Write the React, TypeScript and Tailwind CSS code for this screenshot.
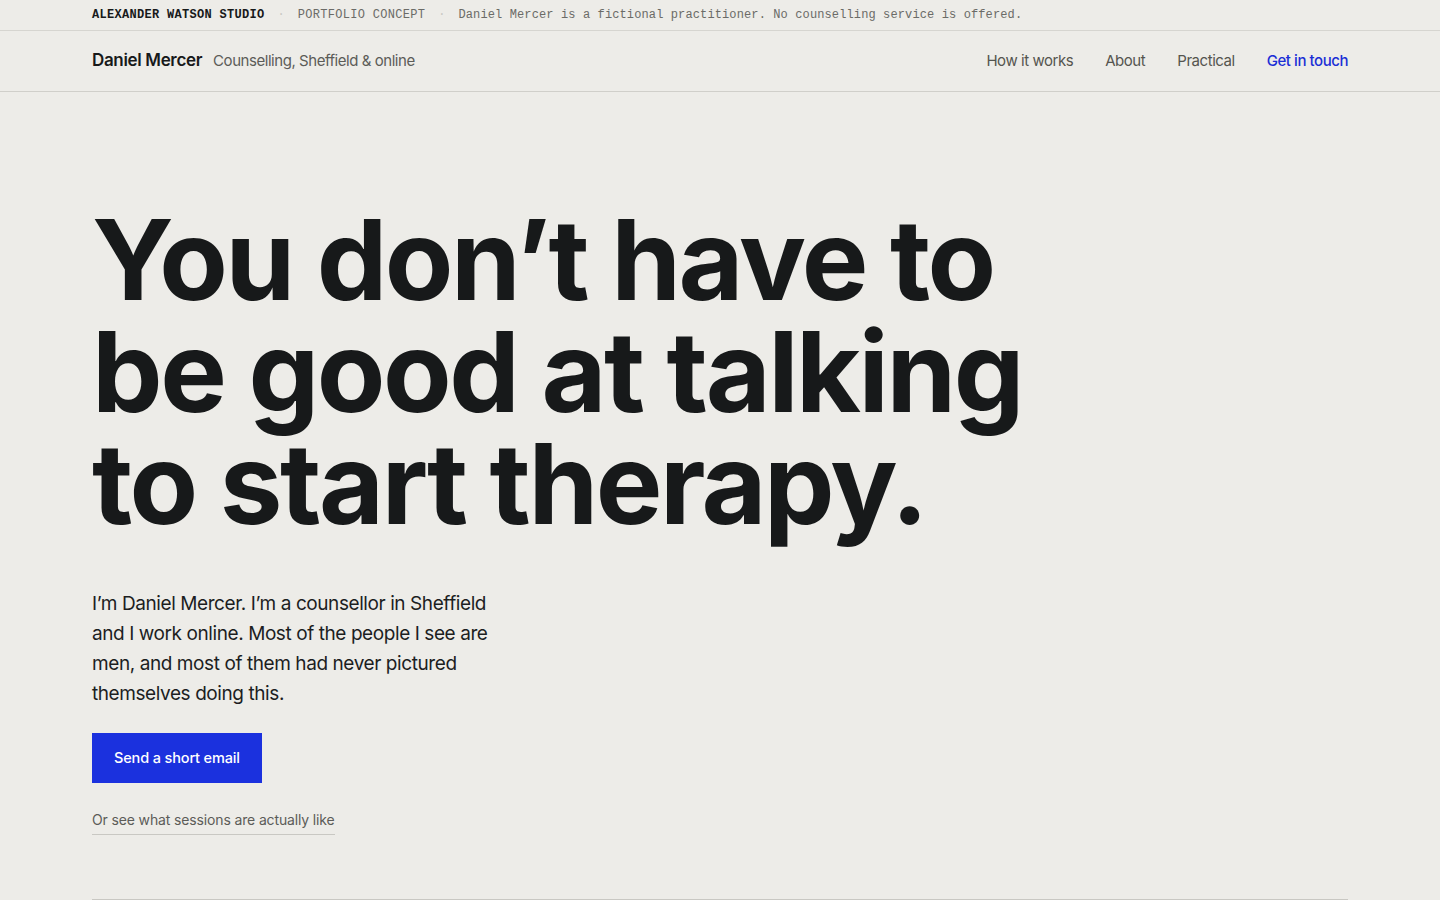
export default function App() {
  const sans = { fontFamily: "Inter, 'Liberation Sans', sans-serif" };
  return (
    <div className="min-h-screen bg-[#edece8] text-[#17191a]" style={sans}>
      {/* Top strip */}
      <div className="border-b border-[#d6d5d0]">
        <div
          className="mx-[92px] h-[30px] flex items-center gap-[13px] text-[12px]"
          style={{ fontFamily: "'Liberation Mono', 'DejaVu Sans Mono', monospace" }}
        >
          <span className="font-bold text-[#17191a] tracking-[0.025em]">ALEXANDER WATSON STUDIO</span>
          <span className="text-[#c9c8c2]">·</span>
          <span className="text-[#6b6b67] tracking-[0.025em]">PORTFOLIO CONCEPT</span>
          <span className="text-[#c9c8c2]">·</span>
          <span className="text-[#6b6b67] tracking-[0.01em]">
            Daniel Mercer is a fictional practitioner. No counselling service is offered.
          </span>
        </div>
      </div>

      {/* Nav */}
      <header className="border-b border-[#d0cfca]">
        <div className="mx-[92px] h-[60px] flex items-center justify-between">
          <div className="flex items-baseline gap-[11px]">
            <span className="text-[17px] font-semibold tracking-[-0.02em]">Daniel Mercer</span>
            <span className="text-[15px] text-[#5c5c58] tracking-[-0.03em]">Counselling, Sheffield &amp; online</span>
          </div>
          <nav className="flex items-center gap-8 text-[15px] tracking-[-0.03em]">
            <a className="text-[#55554f]">How it works</a>
            <a className="text-[#55554f]">About</a>
            <a className="text-[#55554f]">Practical</a>
            <a className="text-[#1b2fd6] font-medium">Get in touch</a>
          </nav>
        </div>
      </header>

      {/* Hero */}
      <main className="mx-[92px] pt-[111px]">
        <h1 className="text-[112px] leading-[112px] font-bold tracking-[-0.022em] max-w-[1000px]">
          You don’t have to
          <br />
          be good at talking
          <br />
          to start therapy.
        </h1>

        <p className="mt-[50px] w-[410px] text-[19px] leading-[30px] tracking-[-0.022em] text-[#1c1e1f]">
          I’m Daniel Mercer. I’m a counsellor in Sheffield and I work online. Most of the people I see are men, and most of them had never pictured themselves doing this.
        </p>

        <button className="mt-[24px] h-[50px] px-[22px] bg-[#1b31de] text-white text-[14.5px] font-medium tracking-[-0.01em]">
          Send a short email
        </button>

        <div className="mt-[24px]">
          <a className="inline-block text-[14px] text-[#5c5c58] tracking-[-0.01em] pb-[4px] border-b border-[#c9c8c3]">
            Or see what sessions are actually like
          </a>
        </div>

        <div className="mt-[64px] border-t border-[#c9c8c3]" />
      </main>
    </div>
  );
}
